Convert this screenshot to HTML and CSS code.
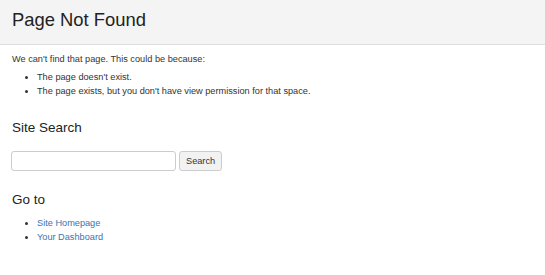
FILE: index.html
```html
<!DOCTYPE html>
<html lang="en">
<head>
    <meta charset="UTF-8">
    <title>Page Not Found</title>
    <link rel="stylesheet" href="styles.css">
</head>
<body>
    <div class="page-header">
        <h1>Page Not Found</h1>
    </div>
    <div class="page-content">
        <p>We can't find that page. This could be because:</p>
        <ul class="reasons">
            <li>The page doesn't exist.</li>
            <li>The page exists, but you don't have view permission for that space.</li>
        </ul>

        <h2>Site Search</h2>
        <form class="search-form" onsubmit="return false">
            <input type="text" class="search-input">
            <button type="submit" class="search-btn">Search</button>
        </form>

        <h2 class="goto-title">Go to</h2>
        <ul class="goto-links">
            <li><a href="#">Site Homepage</a></li>
            <li><a href="#">Your Dashboard</a></li>
        </ul>
    </div>
</body>
</html>
```

FILE: styles.css
```css
* {
    margin: 0;
    padding: 0;
    box-sizing: border-box;
}
body {
    font-family: 'Liberation Sans', Arial, sans-serif;
    font-size: 9.2px;
    line-height: 14px;
    color: #333;
    background: #fff;
}
.page-header {
    background: #f4f4f4;
    border-bottom: 1px solid #ddd;
    height: 45px;
    padding: 8px 12px 0;
}
.page-header h1 {
    font-size: 18.4px;
    font-weight: normal;
    line-height: 24px;
    color: #222;
}
.page-content {
    padding: 7px 12px;
}
ul {
    padding-left: 25px;
}
.reasons {
    margin-top: 4px;
}
h2 {
    font-size: 13.5px;
    font-weight: normal;
    line-height: 20px;
    color: #222;
    margin-top: 20px;
}
.search-form {
    display: flex;
    gap: 3px;
    margin-top: 13px;
}
.search-input {
    width: 165px;
    height: 20px;
    border: 1px solid #ccc;
    border-radius: 3px;
    margin-left: -1px;
}
.search-btn {
    height: 20px;
    padding: 0 6px;
    border: 1px solid #ccc;
    border-radius: 3px;
    background: #f2f2f2;
    font-family: inherit;
    font-size: 9.2px;
    color: #333;
}
.goto-title {
    margin-top: 19px;
}
.goto-links {
    margin-top: 6px;
}
a {
    color: #3b73af;
    text-decoration: none;
}
```
